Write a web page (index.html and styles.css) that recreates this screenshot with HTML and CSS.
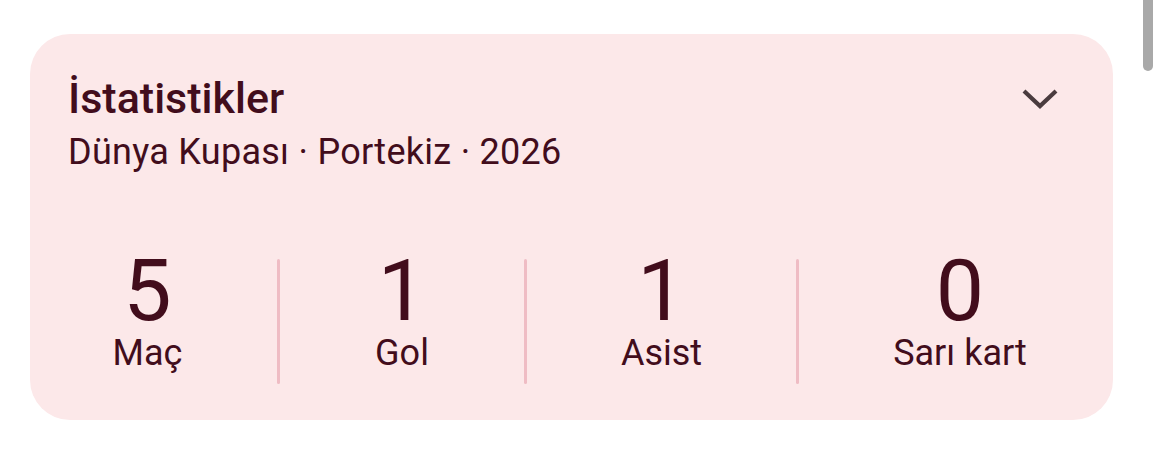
FILE: index.html
```html
<!DOCTYPE html>
<html lang="tr">
<head>
<meta charset="utf-8">
<title>İstatistikler</title>
<link rel="stylesheet" href="styles.css">
</head>
<body>
<div class="scroll-thumb"></div>
<section class="stats-card">
  <header class="stats-head">
    <div class="stats-titles">
      <h2 class="stats-title">İstatistikler</h2>
      <p class="stats-sub">Dünya Kupası · Portekiz · 2026</p>
    </div>
    <button class="toggle" aria-label="Daralt">
      <svg width="40" height="24" viewBox="0 0 40 24"><path d="M4 4 L20 19 L36 4" fill="none" stroke="currentColor" stroke-width="4.2" stroke-linecap="butt" stroke-linejoin="miter"/></svg>
    </button>
  </header>
  <div class="stats-row">
    <div class="stat stat-first"><span class="num">5</span><span class="lbl">Maç</span></div>
    <div class="sep"></div>
    <div class="stat"><span class="num">1</span><span class="lbl">Gol</span></div>
    <div class="sep"></div>
    <div class="stat"><span class="num">1</span><span class="lbl">Asist</span></div>
    <div class="sep"></div>
    <div class="stat stat-last"><span class="num">0</span><span class="lbl">Sarı kart</span></div>
  </div>
</section>
</body>
</html>
```

FILE: styles.css
```css
html, body {
  margin: 0;
  padding: 0;
  background: #ffffff;
}

body {
  font-family: Roboto, "Noto Sans", sans-serif;
  color: #420d1c;
  padding: 34px 0 0 30px;
  position: relative;
  height: 461px;
  box-sizing: border-box;
  overflow: hidden;
}

/* page scrollbar thumb, top right */
.scroll-thumb {
  position: absolute;
  top: 0;
  left: 1143px;
  width: 10px;
  height: 71px;
  background: #a9a9a9;
  border-radius: 0 0 5px 5px;
}

.stats-card {
  width: 1083px;
  height: 386px;
  box-sizing: border-box;
  background: #fce8e9;
  border-radius: 40px;
  padding: 40px 0 36px 0;
  display: flex;
  flex-direction: column;
}

.stats-head {
  display: flex;
  justify-content: space-between;
  align-items: flex-start;
  padding: 0 53px 0 38px;
}

.stats-title {
  margin: 0;
  font-size: 43px;
  font-weight: 500;
  line-height: 48px;
  letter-spacing: 0;
}

.stats-sub {
  margin: 8px 0 0;
  font-size: 36px;
  font-weight: 400;
  line-height: 44px;
  letter-spacing: 0.28px;
}

.toggle {
  background: none;
  border: 0;
  padding: 0;
  margin-top: 13px;
  color: #4a3b3e;
  width: 40px;
  height: 24px;
  display: block;
}

.toggle svg {
  display: block;
}

.stats-row {
  margin-top: auto;
  display: grid;
  grid-template-columns: 247px 3px 244px 3px 269px 3px 314px;
  height: 125px;
}

.sep {
  background: #efbcc4;
  border-radius: 2px;
}

.stat {
  display: flex;
  flex-direction: column;
  align-items: center;
}

.stat-first {
  padding-right: 12px;
}

.stat-last {
  padding-left: 8px;
}

.num {
  font-size: 86px;
  font-weight: 400;
  line-height: 64px;
}

.lbl {
  font-size: 36px;
  line-height: 40px;
  margin-top: 10px;
}
```
